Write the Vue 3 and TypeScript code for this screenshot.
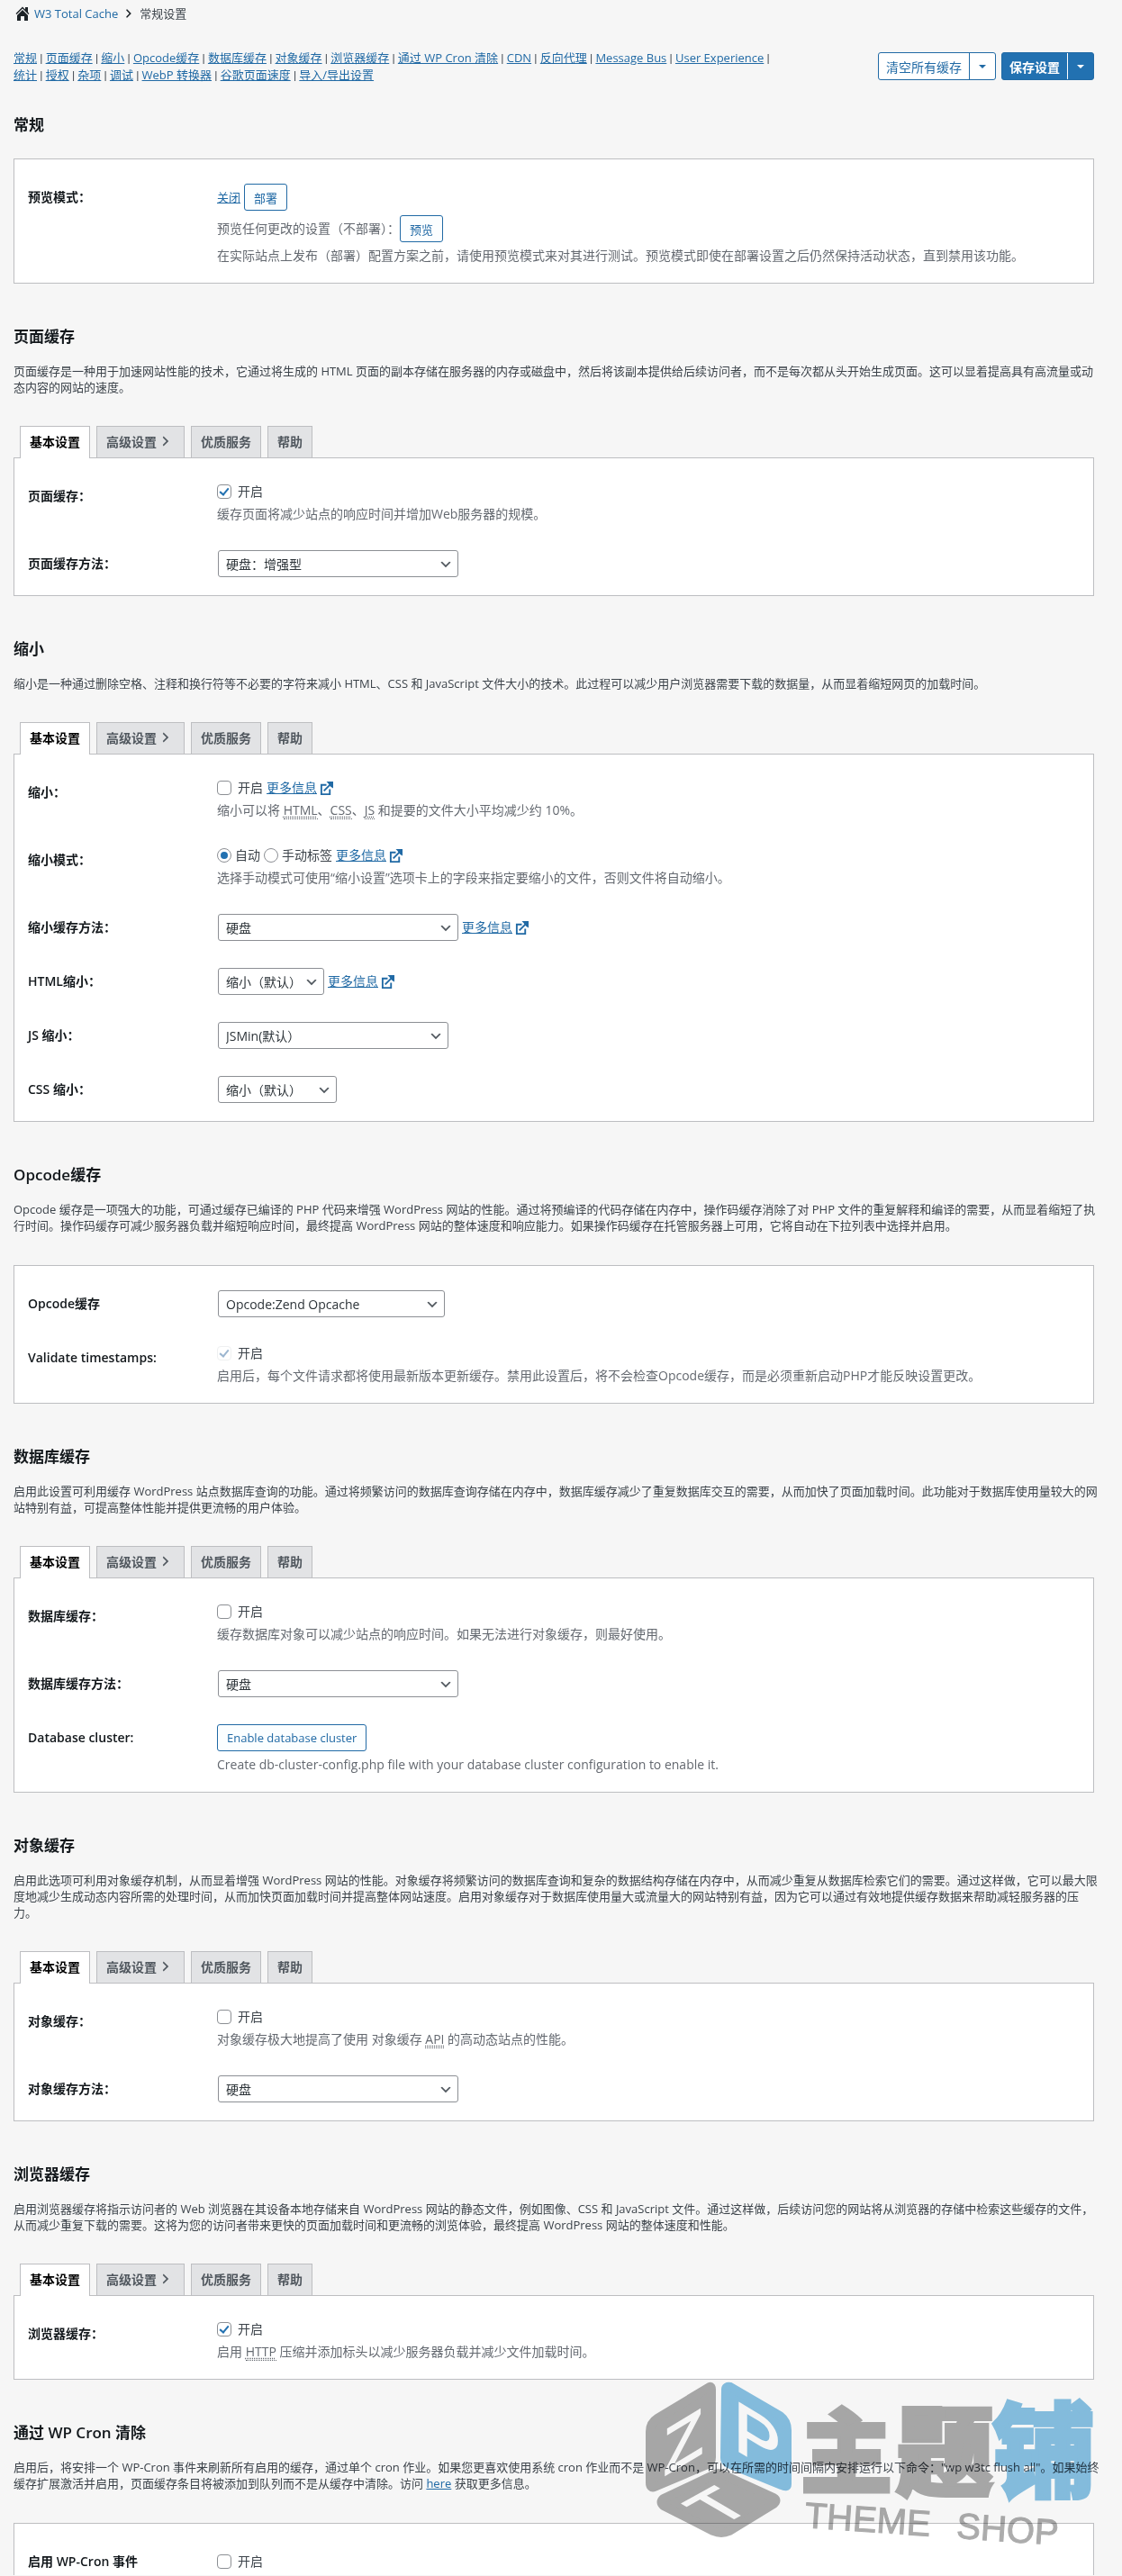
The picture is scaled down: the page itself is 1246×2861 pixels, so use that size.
<script setup lang="ts">
import { reactive } from 'vue'

interface Piece {
  text: string
  abbr?: boolean
  href?: string
}

interface Row {
  id: string
  label: string
  kind: 'preview' | 'check' | 'radio' | 'select' | 'button'
  value?: string
  size?: string
  checked?: boolean
  disabled?: boolean
  more?: boolean
  desc?: Piece[]
}

interface Section {
  id: string
  title: string
  intro?: Piece[]
  tabs?: boolean
  open?: boolean
  rows: Row[]
}

const navLinks: string[] = [
  '常规', '页面缓存', '缩小', 'Opcode缓存', '数据库缓存', '对象缓存', '浏览器缓存',
  '通过 WP Cron 清除', 'CDN', '反向代理', 'Message Bus', 'User Experience',
  '统计', '授权', '杂项', '调试', 'WebP 转换器', '谷歌页面速度', '导入/导出设置',
]

const sections = reactive<Section[]>([
  {
    id: 'general',
    title: '常规',
    rows: [{ id: 'preview', label: '预览模式：', kind: 'preview' }],
  },
  {
    id: 'page_cache',
    title: '页面缓存',
    tabs: true,
    intro: [{ text: '页面缓存是一种用于加速网站性能的技术，它通过将生成的 HTML 页面的副本存储在服务器的内存或磁盘中，然后将该副本提供给后续访问者，而不是每次都从头开始生成页面。这可以显着提高具有高流量或动态内容的网站的速度。' }],
    rows: [
      { id: 'pgcache_on', label: '页面缓存：', kind: 'check', checked: true, desc: [{ text: '缓存页面将减少站点的响应时间并增加Web服务器的规模。' }] },
      { id: 'pgcache_engine', label: '页面缓存方法：', kind: 'select', value: '硬盘：增强型', size: 'w-engine' },
    ],
  },
  {
    id: 'minify',
    title: '缩小',
    tabs: true,
    intro: [{ text: '缩小是一种通过删除空格、注释和换行符等不必要的字符来减小 HTML、CSS 和 JavaScript 文件大小的技术。此过程可以减少用户浏览器需要下载的数据量，从而显着缩短网页的加载时间。' }],
    rows: [
      {
        id: 'minify_on', label: '缩小：', kind: 'check', more: true,
        desc: [
          { text: '缩小可以将 ' }, { text: 'HTML', abbr: true }, { text: '、' }, { text: 'CSS', abbr: true },
          { text: '、' }, { text: 'JS', abbr: true }, { text: ' 和提要的文件大小平均减少约 10%。' },
        ],
      },
      { id: 'minify_mode', label: '缩小模式：', kind: 'radio', more: true, desc: [{ text: '选择手动模式可使用“缩小设置”选项卡上的字段来指定要缩小的文件，否则文件将自动缩小。' }] },
      { id: 'minify_engine', label: '缩小缓存方法：', kind: 'select', value: '硬盘', size: 'w-engine', more: true },
      { id: 'minify_html', label: 'HTML缩小：', kind: 'select', value: '缩小（默认）', size: 'w-html', more: true },
      { id: 'minify_js', label: 'JS 缩小：', kind: 'select', value: 'JSMin(默认）', size: 'w-js' },
      { id: 'minify_css', label: 'CSS 缩小：', kind: 'select', value: '缩小（默认）', size: 'w-css' },
    ],
  },
  {
    id: 'opcode',
    title: 'Opcode缓存',
    intro: [{ text: 'Opcode 缓存是一项强大的功能，可通过缓存已编译的 PHP 代码来增强 WordPress 网站的性能。通过将预编译的代码存储在内存中，操作码缓存消除了对 PHP 文件的重复解释和编译的需要，从而显着缩短了执行时间。操作码缓存可减少服务器负载并缩短响应时间，最终提高 WordPress 网站的整体速度和响应能力。如果操作码缓存在托管服务器上可用，它将自动在下拉列表中选择并启用。' }],
    rows: [
      { id: 'opcode_engine', label: 'Opcode缓存', kind: 'select', value: 'Opcode:Zend Opcache', size: 'w-opcode' },
      { id: 'opcode_validate', label: 'Validate timestamps:', kind: 'check', checked: true, disabled: true, desc: [{ text: '启用后，每个文件请求都将使用最新版本更新缓存。禁用此设置后，将不会检查Opcode缓存，而是必须重新启动PHP才能反映设置更改。' }] },
    ],
  },
  {
    id: 'database_cache',
    title: '数据库缓存',
    tabs: true,
    intro: [{ text: '启用此设置可利用缓存 WordPress 站点数据库查询的功能。通过将频繁访问的数据库查询存储在内存中，数据库缓存减少了重复数据库交互的需要，从而加快了页面加载时间。此功能对于数据库使用量较大的网站特别有益，可提高整体性能并提供更流畅的用户体验。' }],
    rows: [
      { id: 'dbcache_on', label: '数据库缓存：', kind: 'check', desc: [{ text: '缓存数据库对象可以减少站点的响应时间。如果无法进行对象缓存，则最好使用。' }] },
      { id: 'dbcache_engine', label: '数据库缓存方法：', kind: 'select', value: '硬盘', size: 'w-engine' },
      { id: 'dbcluster', label: 'Database cluster:', kind: 'button', value: 'Enable database cluster', desc: [{ text: 'Create db-cluster-config.php file with your database cluster configuration to enable it.' }] },
    ],
  },
  {
    id: 'object_cache',
    title: '对象缓存',
    tabs: true,
    intro: [{ text: '启用此选项可利用对象缓存机制，从而显着增强 WordPress 网站的性能。对象缓存将频繁访问的数据库查询和复杂的数据结构存储在内存中，从而减少重复从数据库检索它们的需要。通过这样做，它可以最大限度地减少生成动态内容所需的处理时间，从而加快页面加载时间并提高整体网站速度。启用对象缓存对于数据库使用量大或流量大的网站特别有益，因为它可以通过有效地提供缓存数据来帮助减轻服务器的压力。' }],
    rows: [
      { id: 'objcache_on', label: '对象缓存：', kind: 'check', desc: [{ text: '对象缓存极大地提高了使用 对象缓存 ' }, { text: 'API', abbr: true }, { text: ' 的高动态站点的性能。' }] },
      { id: 'objcache_engine', label: '对象缓存方法：', kind: 'select', value: '硬盘', size: 'w-engine' },
    ],
  },
  {
    id: 'browser_cache',
    title: '浏览器缓存',
    tabs: true,
    intro: [{ text: '启用浏览器缓存将指示访问者的 Web 浏览器在其设备本地存储来自 WordPress 网站的静态文件，例如图像、CSS 和 JavaScript 文件。通过这样做，后续访问您的网站将从浏览器的存储中检索这些缓存的文件，从而减少重复下载的需要。这将为您的访问者带来更快的页面加载时间和更流畅的浏览体验，最终提高 WordPress 网站的整体速度和性能。' }],
    rows: [
      { id: 'browsercache_on', label: '浏览器缓存：', kind: 'check', checked: true, desc: [{ text: '启用 ' }, { text: 'HTTP', abbr: true }, { text: ' 压缩并添加标头以减少服务器负载并减少文件加载时间。' }] },
    ],
  },
  {
    id: 'wp_cron',
    title: '通过 WP Cron 清除',
    open: true,
    intro: [
      { text: '启用后，将安排一个 WP-Cron 事件来刷新所有启用的缓存，通过单个 cron 作业。如果您更喜欢使用系统 cron 作业而不是 WP-Cron，可以在所需的时间间隔内安排运行以下命令："wp w3tc flush all"。如果始终缓存扩展激活并启用，页面缓存条目将被添加到队列而不是从缓存中清除。访问 ' },
      { text: 'here', href: '#' },
      { text: ' 获取更多信息。' },
    ],
    rows: [{ id: 'wpcron_on', label: '启用 WP-Cron 事件', kind: 'check' }],
  },
])
</script>

<template>
  <div class="page">
    <header class="crumbs">
      <svg class="home" viewBox="0 0 20 20" aria-hidden="true">
        <path d="M16 8.500l1.500 1.500-1 1L10 4.600l-6.500 6.400-1-1L10 2.500l3 3V3h3zM10 6l6 6v6h-4v-5H8v5H4v-6z" />
      </svg>
      <a href="#">W3 Total Cache</a>
      <svg class="dash" viewBox="0 0 20 20" aria-hidden="true"><path d="M6 15l5-5-5-5 1-2 7 7-7 7z" /></svg>
      <span>常规设置</span>
    </header>

    <div class="topbar">
      <nav class="anchors">
        <template v-for="(link, i) in navLinks" :key="link"><a href="#">{{ link }}</a><span v-if="i < navLinks.length - 1" class="sep">{{ ' | ' }}</span></template>
      </nav>
      <div class="actions">
        <div class="split">
          <button type="button" class="main">清空所有缓存</button>
          <button type="button" class="arrow" aria-label="更多清空选项"><i class="caret"></i></button>
        </div>
        <div class="split primary">
          <button type="button" class="main">保存设置</button>
          <button type="button" class="arrow" aria-label="更多保存选项"><i class="caret"></i></button>
        </div>
      </div>
    </div>

    <section v-for="s in sections" :key="s.id" class="block">
      <h2>{{ s.title }}</h2>
      <p v-if="s.intro" class="intro" :class="{ tabbed: s.tabs }">
        <template v-for="(p, i) in s.intro" :key="i"><a v-if="p.href" :href="p.href">{{ p.text }}</a><template v-else>{{ p.text }}</template></template>
      </p>
      <div v-if="s.tabs" class="tabs">
        <button type="button" class="tab active">基本设置</button>
        <button type="button" class="tab">高级设置<svg class="dash" viewBox="0 0 20 20" aria-hidden="true"><path d="M6 15l5-5-5-5 1-2 7 7-7 7z" /></svg></button>
        <button type="button" class="tab">优质服务</button>
        <button type="button" class="tab">帮助</button>
      </div>
      <div class="panel" :class="{ open: s.open }">
        <div v-for="r in s.rows" :key="r.id" class="row">
          <label class="name" :for="r.id">{{ r.label }}</label>
          <div class="field">
            <template v-if="r.kind === 'preview'">
              <div class="line tall"><a class="small" href="#">关闭</a><button :id="r.id" type="button" class="btn">部署</button></div>
              <div class="line tall second"><span class="muted">预览任何更改的设置（不部署）：</span><button type="button" class="btn">预览</button></div>
              <p class="desc">在实际站点上发布（部署）配置方案之前，请使用预览模式来对其进行测试。预览模式即使在部署设置之后仍然保持活动状态，直到禁用该功能。</p>
            </template>
            <div v-else class="line" :class="{ tall: r.kind === 'select' || r.kind === 'button' }">
              <template v-if="r.kind === 'check'">
                <input :id="r.id" v-model="r.checked" type="checkbox" :disabled="r.disabled" />
                <label class="on" :for="r.id">开启</label>
              </template>
              <template v-else-if="r.kind === 'radio'">
                <input :id="r.id" type="radio" name="mode" checked />
                <label :for="r.id">自动</label>
                <input id="mode_manual" type="radio" name="mode" />
                <label for="mode_manual">手动标签</label>
              </template>
              <span v-else-if="r.kind === 'select'" class="pick" :class="r.size">
                <select :id="r.id"><option>{{ r.value }}</option></select>
                <svg viewBox="0 0 20 20" aria-hidden="true"><path d="M5 6l5 5 5-5 2 1-7 7-7-7z" /></svg>
              </span>
              <button v-else :id="r.id" type="button" class="btn">{{ r.value }}</button>
              <a v-if="r.more" class="more" href="#"><span>更多信息</span><svg viewBox="0 0 16 16" aria-hidden="true">
                <path d="M8 4H2v11h10V9" /><path d="M5 11l8-8" /><path class="head" d="M8 0h8v8l-3-2-3-4z" />
              </svg></a>
            </div>
            <p v-if="r.desc" class="desc">
              <template v-for="(p, i) in r.desc" :key="i"><abbr v-if="p.abbr" :title="p.text">{{ p.text }}</abbr><template v-else>{{ p.text }}</template></template>
            </p>
          </div>
        </div>
      </div>
      <svg v-if="s.open" class="brand" viewBox="0 0 510 190" aria-label="主题铺 THEME SHOP">
        <g stroke-linejoin="round" stroke-width="10">
          <path class="g" d="M78 12Q80 11 80 15V90Q80 96 76 98L17 123Q12 125 12 118V62Q12 52 20 47Z" />
          <path class="b" d="M96 15Q96 11 101 12L156 44Q164 50 164 60V120Q164 124 158 121L99 97Q95 95 95 91Z" />
          <path class="g" d="M84 109Q88 107 92 109L149 135Q154 138 149 142L100 172Q91 176 82 172L27 144Q22 140 27 136Z" />
        </g>
        <text class="face" font-size="72" transform="translate(27 111) skewY(-31)">Z</text>
        <text class="face" font-size="78" transform="translate(105 80) skewY(31)">P</text>
        <text class="face" font-size="72" transform="matrix(.87 -.48 .86 .5 89 167)">T</text>
        <text class="hz g" x="179" y="122" font-size="102">主</text>
        <text class="hz g" x="285" y="124" font-size="108">题</text>
        <text class="hz b" x="392" y="125" font-size="114">铺</text>
        <g class="en g" transform="translate(183 168) rotate(4)">
          <text x="0" y="0">THEME</text>
          <text x="169" y="0">SHOP</text>
        </g>
      </svg>
    </section>
  </div>
</template>

<style>
body {
  margin: 0;
  background: #f6f6f6;
}
</style>

<style scoped>
.page {
  box-sizing: border-box;
  padding: 5px 31px 0 15px;
  background: #f6f6f6;
  color: #3c434a;
  font-family: "Open Sans", "Noto Sans CJK SC", sans-serif;
  font-size: 14px;
  line-height: 20px;
}

button,
select,
input {
  font-family: inherit;
  box-sizing: border-box;
  margin: 0;
}

a {
  color: #216aa5;
}

.crumbs {
  display: flex;
  align-items: center;
  height: 20px;
  font-size: 13px;
}

.crumbs a {
  text-decoration: none;
}

.home {
  width: 20px;
  height: 20px;
  margin-right: 3px;
  fill: #1d2327;
}

.crumbs .dash {
  width: 14px;
  height: 14px;
  margin: 0 5px;
  fill: #1d2327;
}

.topbar {
  display: flex;
  align-items: flex-start;
  justify-content: space-between;
  margin-top: 30px;
}

.anchors {
  width: 70%;
  font-size: 13px;
  line-height: 19px;
}

.sep {
  font-family: Roboto, sans-serif;
}

.actions {
  display: flex;
  gap: 6px;
  margin-top: 3px;
}

.split {
  display: flex;
  height: 31px;
  border: 1px solid #216aa5;
  border-radius: 3px;
  background: #fff;
  overflow: hidden;
  box-sizing: border-box;
}

.split button {
  border: 0;
  background: none;
  color: #216aa5;
  font-size: 14px;
  padding: 0 8px;
}

.split .arrow {
  width: 29px;
  padding: 0;
  border-left: 1px solid #216aa5;
}

.split.primary {
  background: #2271b1;
}

.split.primary button {
  color: #fff;
  font-weight: 600;
}

.split.primary .arrow {
  border-left-color: #fff;
}

.caret {
  display: block;
  width: 0;
  height: 0;
  margin: 0 auto;
  border: 4px solid transparent;
  border-top-color: currentColor;
  border-bottom: 0;
}

.block {
  position: relative;
  padding-top: 47px;
}

.topbar + .block {
  padding-top: 34px;
}

h2 {
  margin: 0 0 25px;
  color: #13181c;
  font-size: 17px;
  font-weight: 600;
  line-height: 24px;
}

.intro {
  margin: -8px -7px 35px 0;
  font-size: 13px;
  line-height: 18px;
}

.intro.tabbed {
  margin-bottom: 34px;
}

.tabs {
  display: flex;
  gap: 7px;
  padding-left: 7px;
}

.tab {
  display: flex;
  align-items: center;
  height: 35px;
  padding: 0 10px 2px;
  border: 1px solid #bdbec1;
  border-bottom: 0;
  background: #e2e3e5;
  color: #50575e;
  font-size: 14px;
  font-weight: 600;
}

.tab.active {
  height: 36px;
  margin-bottom: -1px;
  padding-bottom: 3px;
  position: relative;
  background: #fff;
  color: #000;
}

.tab .dash {
  width: 20px;
  height: 16px;
  fill: currentColor;
}

.panel {
  padding: 12px 15px 5px;
  border: 1px solid #bdbec1;
  background: #fff;
}

.panel.open {
  padding-bottom: 0;
  border-bottom: 0;
}

.row {
  display: flex;
  align-items: flex-start;
}

.name {
  flex: none;
  width: 210px;
  padding: 20px 0;
  color: #13181c;
  font-weight: 600;
}

.field {
  flex: 1;
  padding: 15px 0;
}

.open .name {
  padding-bottom: 5px;
}

.open .field {
  padding: 20px 0 5px;
}

.line {
  display: flex;
  align-items: center;
  gap: 4px;
  height: 20px;
}

.line.tall {
  height: 30px;
}

.line.second {
  gap: 0;
  margin-top: 5px;
}

.small {
  font-size: 13px;
}

.muted,
.desc {
  color: #646970;
}

.desc {
  margin: 5px 0 0;
}

abbr {
  text-decoration: underline dotted;
  text-underline-offset: 2px;
  border-bottom: 1px dotted #646970;
}

.btn {
  height: 30px;
  padding: 0 10px;
  border: 1px solid #216aa5;
  border-radius: 3px;
  background: #fbfeff;
  color: #216aa5;
  font-size: 13px;
}

.on {
  margin-left: 3px;
}

input[type="checkbox"],
input[type="radio"] {
  appearance: none;
  display: grid;
  place-items: center;
  flex: none;
  width: 16px;
  height: 16px;
  border: 1px solid #8c8f94;
  border-radius: 4px;
  background: #fff;
}

input[type="radio"] {
  border-radius: 50%;
}

input[type="radio"]:checked::before {
  content: "";
  width: 8px;
  height: 8px;
  border-radius: 50%;
  background: #2271b1;
}

input[type="checkbox"]:checked::before {
  content: "";
  width: 4px;
  height: 8px;
  margin-bottom: 2px;
  border: solid #2271b1;
  border-width: 0 2px 2px 0;
  transform: rotate(40deg);
}

input:disabled {
  border-color: #eef0f1;
}

input[type="checkbox"]:disabled::before {
  border-color: #9cb6d0;
}

.pick {
  position: relative;
  margin-left: 1px;
  height: 30px;
}

.pick select {
  appearance: none;
  width: 100%;
  height: 30px;
  padding: 0 24px 0 8px;
  border: 1px solid #8c8f94;
  border-radius: 3px;
  background: #fff;
  color: #2c3338;
  font-size: 14px;
}

.pick svg {
  position: absolute;
  top: 8px;
  right: 6px;
  width: 16px;
  height: 16px;
  fill: #50575e;
  pointer-events: none;
}

.w-engine {
  width: 267px;
}

.w-html {
  width: 118px;
}

.w-js {
  width: 256px;
}

.w-css {
  width: 132px;
}

.w-opcode {
  width: 252px;
}

.more {
  display: flex;
  align-items: center;
  gap: 3px;
  text-decoration: none;
}

.more span {
  text-decoration: underline;
}

.more svg {
  width: 15px;
  height: 15px;
  fill: none;
  stroke: #216aa5;
  stroke-width: 2;
}

.more .head {
  fill: #216aa5;
  stroke: none;
}

.brand {
  position: absolute;
  top: -4px;
  right: -5px;
  width: 510px;
  height: 190px;
  overflow: visible;
  mix-blend-mode: multiply;
  pointer-events: none;
}

.brand .g {
  fill: #acacac;
  stroke: #acacac;
}

.brand .b {
  fill: #88c2e4;
  stroke: #88c2e4;
}

.face {
  fill: #fff;
  stroke: #fff;
  stroke-width: 2;
  font-family: "Liberation Sans", sans-serif;
}

.hz {
  font-family: "Noto Sans CJK SC", sans-serif;
  font-weight: 900;
  stroke-width: 4;
}

.en {
  font-family: "Liberation Sans", sans-serif;
  font-size: 40px;
  stroke-width: 1;
}
</style>
